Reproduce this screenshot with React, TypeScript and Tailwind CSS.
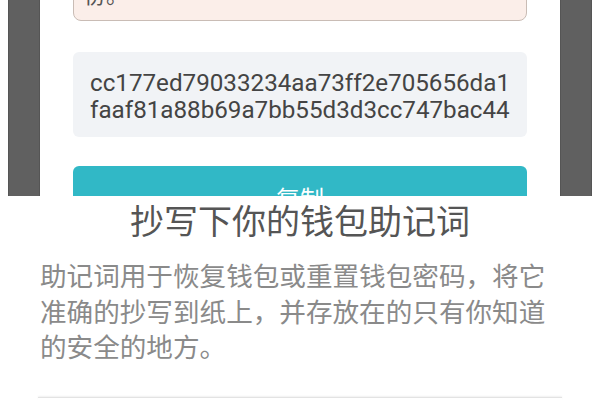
export default function App() {
  return (
    <div className="w-[600px] h-[400px] bg-white overflow-hidden flex flex-col" style={{ fontFamily: "Roboto, 'Noto Sans CJK SC', sans-serif" }}>
      <div className="h-[196px] flex shrink-0 overflow-hidden">
        <div className="w-[8px] bg-white" />
        <div className="w-[32px] bg-[#606060] border-x border-[#555]" />
        <div className="flex-1 bg-white px-[33px] flex flex-col overflow-hidden">
          <div className="mt-[-40px] h-[61px] shrink-0 rounded-[8px] border border-[#c9bcb5] bg-[#fbeee9] px-[10px] flex items-end">
            <span className="text-[22px] leading-[30px] text-[#555] mb-[12px]" style={{ fontFamily: "'Noto Sans CJK SC', sans-serif" }}>份。</span>
          </div>
          <div className="mt-[31px] h-[85px] shrink-0 rounded-[6px] bg-[#f1f3f6] pl-[17px] pr-[10px] pt-[18px] text-[24.2px] leading-[27px] text-[#444] whitespace-nowrap">
            <div>cc177ed79033234aa73ff2e705656da1</div>
            <div>faaf81a88b69a7bb55d3d3cc747bac44</div>
          </div>
          <div className="mt-[29px] h-[64px] shrink-0 rounded-[6px] bg-[#31b8c6] flex items-center justify-center text-white text-[24px]" style={{ fontFamily: "'Noto Sans CJK SC', sans-serif" }}>
            复制
          </div>
        </div>
        <div className="w-[32px] bg-[#606060] border-x border-[#555]" />
        <div className="w-[8px] bg-white" />
      </div>
      <div className="flex-1 flex flex-col px-[40px]" style={{ fontFamily: "'Noto Sans CJK SC', sans-serif" }}>
        <div className="pt-[2px] text-center text-[34px] leading-[44px] text-[#555]">抄写下你的钱包助记词</div>
        <div className="mt-[15px] text-[26.6px] leading-[35.5px] text-[#8a8a8a]">
          助记词用于恢复钱包或重置钱包密码，将它准确的抄写到纸上，并存放在的只有你知道的安全的地方。
        </div>
        <div className="mt-auto h-[3px] border-t border-[#e3e3e3] shadow-[0_-1px_2px_rgba(0,0,0,0.06)] mx-[-2px]" />
      </div>
    </div>
  );
}
